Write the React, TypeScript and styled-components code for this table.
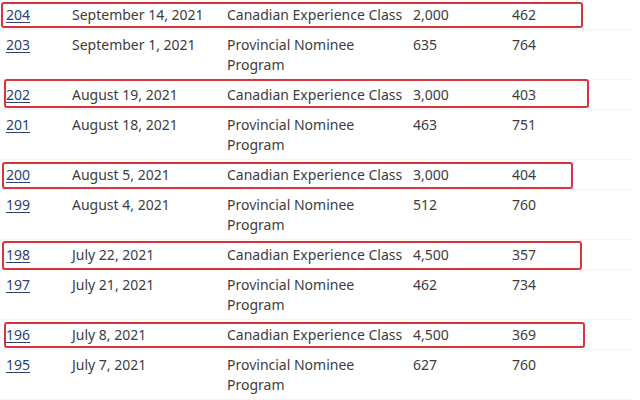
import * as React from "react";
import styled, { createGlobalStyle } from "styled-components";

const GlobalStyle = createGlobalStyle`
  html, body {
    margin: 0;
    padding: 0;
    background: #ffffff;
  }
  body {
    font-family: "Noto Sans", "Open Sans", sans-serif;
    color: #3d3d3d;
  }
`;

const Page = styled.div`
  position: relative;
  width: 640px;
  height: 400px;
  overflow: hidden;
  background: #ffffff;
`;

const Table = styled.table`
  width: 632px;
  border-collapse: collapse;
  table-layout: fixed;
  font-size: 14px;
  line-height: 20px;
`;

const Row = styled.tr`
  border-bottom: 1px solid #f6f6f6;
`;

const Cell = styled.td<{ $w: number; $first?: boolean }>`
  width: ${(p) => p.$w}px;
  padding: 5px 10px 4px ${(p) => (p.$first ? 6 : 0)}px;
  vertical-align: top;
  box-sizing: border-box;
`;

const DrawLink = styled.a`
  color: #2b4270;
  text-decoration: underline;
  text-underline-offset: 2px;
`;

const Highlight = styled.div<{ $l: number; $t: number; $w: number; $h: number }>`
  position: absolute;
  left: ${(p) => p.$l}px;
  top: ${(p) => p.$t}px;
  width: ${(p) => p.$w}px;
  height: ${(p) => p.$h}px;
  box-sizing: border-box;
  border: 2px solid #d6363b;
  border-radius: 3px;
  pointer-events: none;
`;

type Draw = { id: number; date: string; type: string; size: string; crs: string };

const draws: Draw[] = [
  { id: 204, date: "September 14, 2021", type: "Canadian Experience Class", size: "2,000", crs: "462" },
  { id: 203, date: "September 1, 2021", type: "Provincial Nominee Program", size: "635", crs: "764" },
  { id: 202, date: "August 19, 2021", type: "Canadian Experience Class", size: "3,000", crs: "403" },
  { id: 201, date: "August 18, 2021", type: "Provincial Nominee Program", size: "463", crs: "751" },
  { id: 200, date: "August 5, 2021", type: "Canadian Experience Class", size: "3,000", crs: "404" },
  { id: 199, date: "August 4, 2021", type: "Provincial Nominee Program", size: "512", crs: "760" },
  { id: 198, date: "July 22, 2021", type: "Canadian Experience Class", size: "4,500", crs: "357" },
  { id: 197, date: "July 21, 2021", type: "Provincial Nominee Program", size: "462", crs: "734" },
  { id: 196, date: "July 8, 2021", type: "Canadian Experience Class", size: "4,500", crs: "369" },
  { id: 195, date: "July 7, 2021", type: "Provincial Nominee Program", size: "627", crs: "760" },
];

// red annotation frames drawn over the highlighted rows
const boxes = [
  { l: 1, t: 2, w: 582, h: 26 },
  { l: 4, t: 79, w: 585, h: 29 },
  { l: 2, t: 162, w: 571, h: 27 },
  { l: 2, t: 241, w: 580, h: 29 },
  { l: 4, t: 322, w: 581, h: 26 },
];

export default function App() {
  return (
    <Page>
      <GlobalStyle />
      <Table>
        <tbody>
          {draws.map((d) => (
            <Row key={d.id}>
              <Cell $w={72} $first>
                <DrawLink href="#">{d.id}</DrawLink>
              </Cell>
              <Cell $w={155}>{d.date}</Cell>
              <Cell $w={186}>{d.type}</Cell>
              <Cell $w={99}>{d.size}</Cell>
              <Cell $w={120}>{d.crs}</Cell>
            </Row>
          ))}
        </tbody>
      </Table>
      {boxes.map((b, i) => (
        <Highlight key={i} $l={b.l} $t={b.t} $w={b.w} $h={b.h} />
      ))}
    </Page>
  );
}
